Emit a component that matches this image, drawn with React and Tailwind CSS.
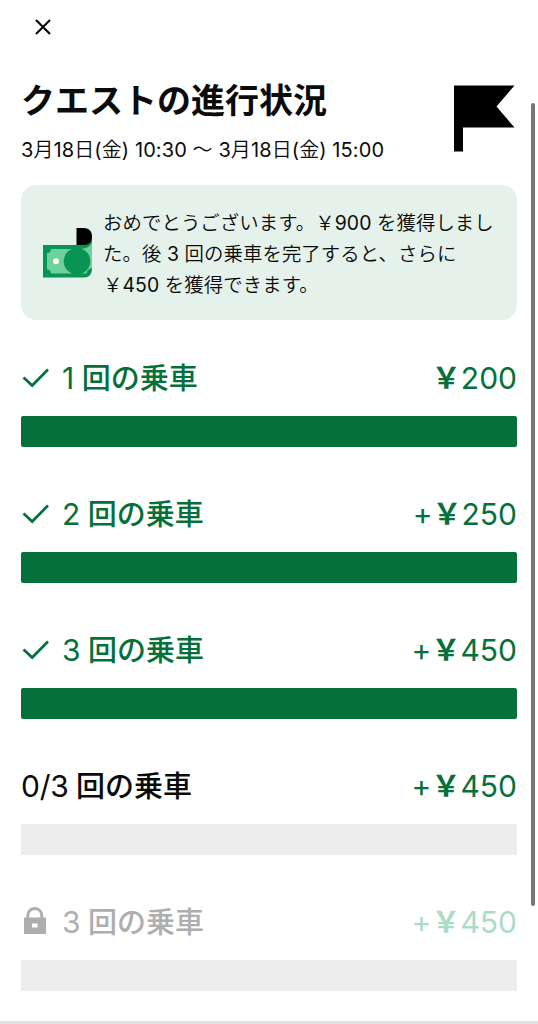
import { clsx } from 'clsx';

// full-width yen sign
const YEN = '\uffe5';

const quests = [
  { id: 1, status: 'done', count: '1', reward: `${YEN}200` },
  { id: 2, status: 'done', count: '2', reward: `+${YEN}250` },
  { id: 3, status: 'done', count: '3', reward: `+${YEN}450` },
  { id: 4, status: 'active', count: '0/3', reward: `+${YEN}450` },
  { id: 5, status: 'locked', count: '3', reward: `+${YEN}450` },
];

const labelColors = {
  done: 'text-[#05703a]',
  active: 'text-[#0b0b0b]',
  locked: 'text-[#aeaeae]',
};

// Latin digits keep the regular weight next to lighter or heavier kana
function Mixed({ children, latin = 'font-normal' }) {
  return children
    .split(/([\d:/+()]+)/)
    .filter(Boolean)
    .map((part, i) => (
      /^[\d:/+()]/.test(part) ? <span key={i} className={latin}>{part}</span> : part
    ));
}

function CloseIcon() {
  return (
    <svg width="16" height="16" viewBox="0 0 16 16" fill="none" stroke="#000" strokeWidth="2.1">
      <path d="M1 1 15 15M15 1 1 15" />
    </svg>
  );
}

function FlagIcon() {
  return (
    <svg width="61" height="67" viewBox="0 0 61 67">
      <path d="M0 0.500H60.500L42.500 21.500L60.500 42.500H9V66.500H0Z" fill="#000" />
    </svg>
  );
}

function CashIcon() {
  return (
    <svg width="50" height="50" viewBox="0 0 50 50" className="shrink-0">
      <path d="M0 17H33C42 17 49 14 49 7V41C49 46 46 49.500 41 49.500H0Z" fill="#079455" />
      <path d="M8 21H35C42 21 46 19.500 49 15V40C46 40.500 44 42.500 43.500 45.500H8C8 43 6.500 41.500 4 41.500V25C6.500 25 8 23.500 8 21Z" fill="#6fd09b" />
      <circle cx="34" cy="33.200" r="13.300" fill="#079455" />
      <circle cx="13" cy="33.200" r="3" fill="#fff" />
      <path d="M33.500 0H41C46 0 49 3.500 49 8.500S46 17 41 17H33.500Z" fill="#000" />
    </svg>
  );
}

function CheckIcon() {
  return (
    <svg width="28" height="22" viewBox="0 0 28 22" fill="none" stroke="currentColor" strokeWidth="2.7">
      <path d="M2.500 10.500 11.200 18.500 27 2.500" />
    </svg>
  );
}

function LockIcon() {
  return (
    <svg width="27" height="28" viewBox="0 0 27 28" className="overflow-visible">
      <path d="M6.800 11V7.500a7 7 0 0 1 14 0V11" fill="none" stroke="currentColor" strokeWidth="3" />
      <path d="M3 9.500H25V26H3ZM11 15.500V19.500H16.500V15.500Z" fill="currentColor" fillRule="evenodd" />
    </svg>
  );
}

function QuestRow({ quest }) {
  const { status, count, reward } = quest;

  return (
    <li>
      <div className={clsx('flex h-9 items-center text-[29px] leading-9 font-medium', labelColors[status])}>
        {status === 'done' && <span className="w-[41px]"><CheckIcon /></span>}
        {status === 'locked' && <span className="w-[41px]"><LockIcon /></span>}
        <span className="pt-px whitespace-pre">
          <Mixed latin="text-[30px] leading-9 font-normal tracking-[-0.3px]">{`${count} 回の乗車`}</Mixed>
        </span>
        <span className={clsx('ml-auto pt-px font-bold', status === 'locked' ? 'text-[#acdcc6]' : 'text-[#05703a]')}>
          <Mixed latin="text-[30px] leading-9 font-normal">{reward}</Mixed>
        </span>
      </div>
      <div className={clsx('mt-[20px] h-[31px]', status === 'done' ? 'rounded-xs bg-[#05703a]' : 'bg-[#ededed]')} />
    </li>
  );
}

export default function App() {
  return (
    <div className="relative flex h-[1024px] w-[538px] flex-col overflow-hidden bg-white font-['Inter','Noto_Sans_CJK_JP',sans-serif] text-[#0b0b0b]">
      <button type="button" aria-label="閉じる" className="mt-[19px] ml-[35px] h-4 w-4">
        <CloseIcon />
      </button>

      <main className="flex flex-col pr-[21px] pl-[21px]">
        <header className="mt-[43px] flex items-start justify-between">
          <div>
            <h1 className="text-[34px] leading-[46px] font-bold">クエストの進行状況</h1>
            <p className="mt-[12px] text-[20px] leading-7 font-[350] tracking-[0.09px] whitespace-pre">
              <Mixed>3月18日(金) 10:30 〜 3月18日(金) 15:00</Mixed>
            </p>
          </div>
          <div className="mt-[7px] mr-0.5">
            <FlagIcon />
          </div>
        </header>

        <section className="mt-[21px] flex h-[135px] rounded-[15px] bg-[#e5f2eb] pt-[22px] pl-[22px]">
          <div className="mt-[21px] mr-[10px]">
            <CashIcon />
          </div>
          <p className="pt-px text-[19.4px] leading-[31px] font-[350] tracking-[0.08px] whitespace-nowrap">
            <Mixed>{`おめでとうございます。${YEN}900 を獲得しまし`}</Mixed>
            <br />
            <Mixed>た。後 3 回の乗車を完了すると、さらに</Mixed>
            <br />
            <Mixed>{`${YEN}450 を獲得できます。`}</Mixed>
          </p>
        </section>

        <ul className="mt-[40px] flex flex-col gap-[49px]">
          {quests.map((quest) => (
            <QuestRow key={quest.id} quest={quest} />
          ))}
        </ul>
      </main>

      <div className="mt-auto h-[3px] shrink-0 bg-[#e2e2e2]" />

      {/* Scrollbar */}
      <div className="absolute top-[103px] right-[3px] h-[803px] w-1 rounded-full bg-[#777]" />
    </div>
  );
}
